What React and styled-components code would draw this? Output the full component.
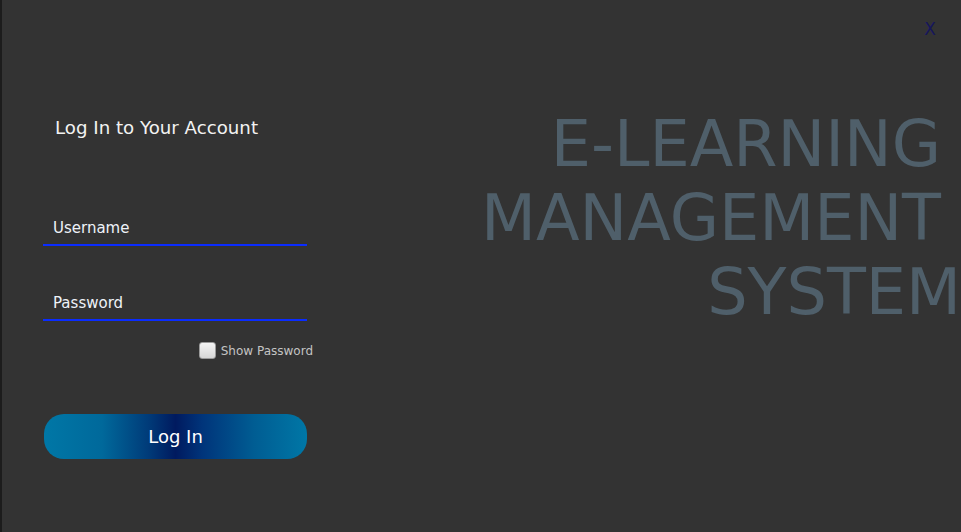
import styled, { createGlobalStyle } from 'styled-components';

const GlobalStyle = createGlobalStyle`
  html, body {
    margin: 0;
    padding: 0;
    background: #333333;
  }
  body {
    font-family: 'DejaVu Sans', 'Liberation Sans', sans-serif;
    overflow: hidden;
  }
`;

const Window = styled.div`
  position: relative;
  box-sizing: border-box;
  width: 100vw;
  height: 100vh;
  display: flex;
  background: #333333;
  border-left: 2px solid #1c1c1c;
`;

const CloseButton = styled.button`
  position: absolute;
  top: 19px;
  right: 25px;
  padding: 0;
  border: none;
  background: transparent;
  color: #16165c;
  font-family: 'DejaVu Sans', sans-serif;
  font-size: 17px;
  cursor: pointer;
`;

const FormPanel = styled.div`
  width: 270px;
  padding: 117px 0 0 41px;
  display: flex;
  flex-direction: column;
`;

const Heading = styled.h1`
  margin: 0 0 73px 12px;
  font-size: 18.2px;
  font-weight: normal;
  line-height: 21px;
  color: #f2f2f2;
`;

const Field = styled.input`
  box-sizing: border-box;
  width: 264px;
  height: 35px;
  margin-bottom: ${p => p.$gap || 0}px;
  padding: 0 0 0 10px;
  border: none;
  border-bottom: 2px solid #0a2cff;
  background: transparent;
  color: #f2f2f2;
  font-family: 'DejaVu Sans', sans-serif;
  font-size: 15px;
  outline: none;

  &::placeholder {
    color: #eef2f8;
    opacity: 1;
  }
`;

const CheckRow = styled.label`
  display: flex;
  justify-content: flex-end;
  align-items: center;
  gap: 5px;
  margin-top: 21px;
  height: 17px;
  color: #c4c4c4;
  font-size: 12px;
  cursor: pointer;
`;

const Check = styled.input`
  appearance: none;
  box-sizing: border-box;
  width: 17px;
  height: 17px;
  margin: 0;
  border: 1px solid #9a9a9a;
  border-radius: 3px;
  background: linear-gradient(#f4f4f4, #d6d6d6);
`;

const LoginButton = styled.button`
  width: 263px;
  height: 45px;
  margin: 55px 0 0 1px;
  border: none;
  border-radius: 20px;
  background: linear-gradient(
    90deg,
    #0077a6 0%,
    #00699b 22%,
    #003a78 40%,
    #001a5f 50%,
    #00347a 60%,
    #005d93 80%,
    #0077a6 100%
  );
  color: #ffffff;
  font-family: 'DejaVu Sans', sans-serif;
  font-size: 18px;
  cursor: pointer;
`;

const Brand = styled.div`
  flex: 1;
  padding-top: 107px;
  text-align: right;
  color: #4f5f6a;
  font-size: 63.7px;
  line-height: 74px;
  white-space: pre;
`;

const BrandLine = styled.div`
  padding-right: ${p => (p.$trail ? 20 : 0)}px;
`;

export default function App() {
  return (
    <>
      <GlobalStyle />
      <Window>
        <CloseButton>X</CloseButton>
        <FormPanel>
          <Heading>Log In to Your Account</Heading>
          <Field placeholder="Username" $gap={40} />
          <Field type="password" placeholder="Password" />
          <CheckRow>
            <Check type="checkbox" />
            Show Password
          </CheckRow>
          <LoginButton>Log In</LoginButton>
        </FormPanel>
        <Brand>
          <BrandLine $trail>E-LEARNING</BrandLine>
          <BrandLine $trail>MANAGEMENT</BrandLine>
          <BrandLine>SYSTEM</BrandLine>
        </Brand>
      </Window>
    </>
  );
}
